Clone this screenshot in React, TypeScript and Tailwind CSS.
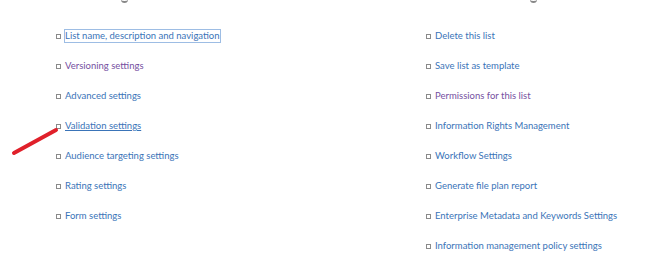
const left = [
  { label: "List name, description and navigation", focus: true },
  { label: "Versioning settings", visited: true },
  { label: "Advanced settings" },
  { label: "Validation settings", hover: true },
  { label: "Audience targeting settings" },
  { label: "Rating settings" },
  { label: "Form settings" },
];

const right = [
  { label: "Delete this list" },
  { label: "Save list as template" },
  { label: "Permissions for this list", visited: true },
  { label: "Information Rights Management" },
  { label: "Workflow Settings" },
  { label: "Generate file plan report" },
  { label: "Enterprise Metadata and Keywords Settings" },
  { label: "Information management policy settings" },
];

type Item = { label: string; focus?: boolean; visited?: boolean; hover?: boolean };

function LinkRow({ item }: { item: Item }) {
  const color = item.visited ? "text-[#76509f]" : "text-[#3a74b8]";
  return (
    <li className="flex h-[30px] items-center">
      <span className="mr-[3px] h-[5px] w-[5px] border border-[#8a8a8a] bg-white" />
      <span
        className={`${color} leading-[12px] ${item.hover ? "underline" : ""} ${
          item.focus ? "border border-[#9dbde4]" : "border border-transparent"
        }`}
      >
        {item.label}
      </span>
    </li>
  );
}

export default function App() {
  return (
    <div className="relative h-[266px] w-[650px] overflow-hidden bg-white font-['Lato',sans-serif] text-[9.5px]">
      {/* cut-off section headings: only the descenders remain */}
      <div className="h-[21px]" />
      <div className="absolute left-[121px] top-[-1px] h-[4px] w-[7px] rounded-b-full border-b-2 border-[#888]" />
      <div className="absolute left-[530px] top-[-1px] h-[4px] w-[7px] rounded-b-full border-b-2 border-[#888]" />

      <div className="flex">
        <ul className="w-[426px] pl-[56px]">
          {left.map((it) => (
            <LinkRow key={it.label} item={it} />
          ))}
        </ul>
        <ul className="flex-1">
          {right.map((it) => (
            <LinkRow key={it.label} item={it} />
          ))}
        </ul>
      </div>

      {/* red annotation arrow */}
      <svg className="absolute left-0 top-0" width="650" height="266">
        <line x1="14" y1="153" x2="56" y2="130" stroke="#e0202a" strokeWidth="4" strokeLinecap="round" />
      </svg>
    </div>
  );
}
